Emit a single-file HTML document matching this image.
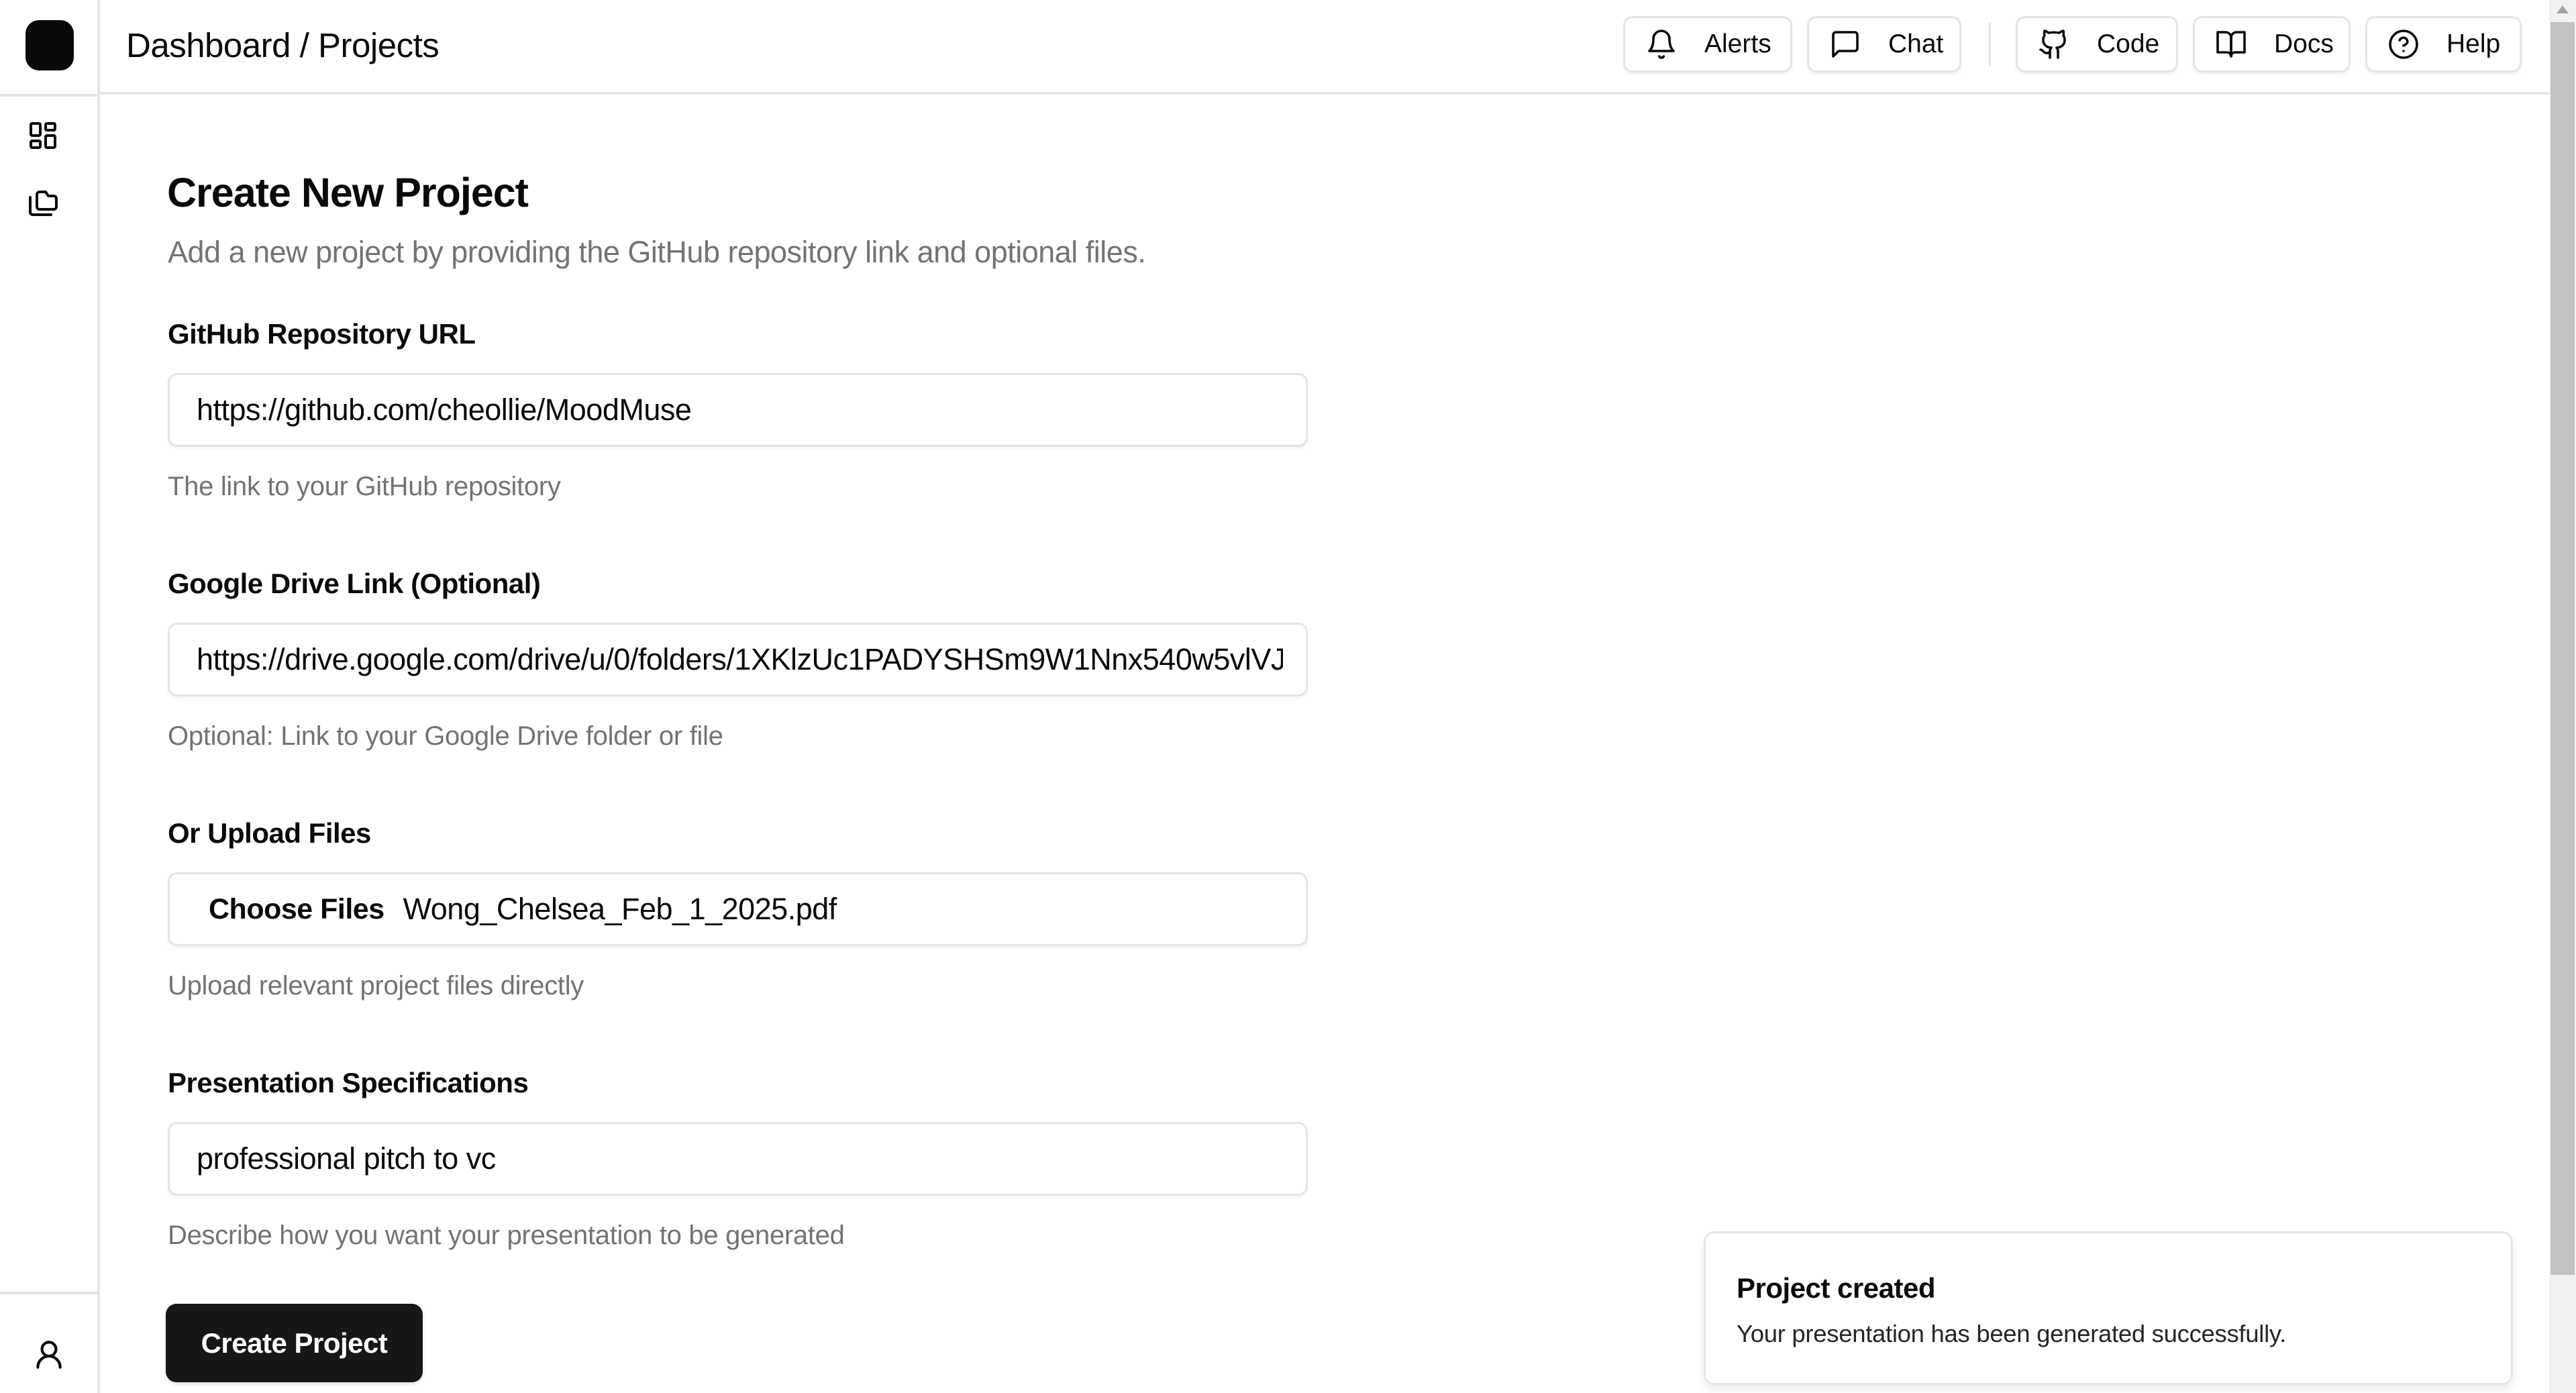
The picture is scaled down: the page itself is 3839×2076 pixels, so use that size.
<!DOCTYPE html>
<html><head><meta charset="utf-8"><style>
*{box-sizing:border-box;margin:0;padding:0}
body{width:3839px;height:2076px;overflow:hidden;background:#fff;font-family:"Liberation Sans",Arial,sans-serif;color:#0a0a0a;position:relative}
.a{position:absolute}
.side{left:0;top:0;width:149px;height:2076px;border-right:4px solid #e5e5e5}
.hdr{left:149px;top:0;width:3650px;height:141px;border-bottom:4px solid #e5e5e5}
.btn{top:24px;height:84px;border:3px solid #e5e5e5;border-radius:14px;box-shadow:0 3px 5px rgba(0,0,0,.06);display:flex;align-items:center;font-size:39px;font-weight:500;padding-left:30px}
.btn svg{width:48px;height:48px;margin-right:40px;fill:none;stroke:#0a0a0a;stroke-width:1.8;stroke-linecap:round;stroke-linejoin:round}
.lbl{left:250px;font-size:42px;font-weight:bold;letter-spacing:-0.5px}
.inp{left:250px;width:1699px;height:110px;border:3px solid #e5e5e5;border-radius:14px;box-shadow:0 3px 5px rgba(0,0,0,.05);display:flex;align-items:center;padding-left:40px;font-size:45px;white-space:nowrap;overflow:hidden;letter-spacing:-0.5px}
.help{left:250px;font-size:40px;color:#737373;letter-spacing:-0.3px}
.ic{fill:none;stroke:#0a0a0a;stroke-width:2;stroke-linecap:round;stroke-linejoin:round}
</style></head><body>
<div class="a side"></div>
<div class="a" style="left:0;top:140px;width:149px;height:4px;background:#e5e5e5"></div>
<div class="a" style="left:0;top:1925px;width:149px;height:4px;background:#e5e5e5"></div>
<div class="a" style="left:38px;top:30px;width:72px;height:75px;background:#0a0a0a;border-radius:20px"></div>
<svg class="a ic" style="left:40px;top:178px" width="48" height="48" viewBox="0 0 24 24"><rect x="3" y="3" width="7" height="9" rx="1"/><rect x="14" y="3" width="7" height="5" rx="1"/><rect x="14" y="12" width="7" height="9" rx="1"/><rect x="3" y="16" width="7" height="5" rx="1"/></svg>
<svg class="a ic" style="left:40px;top:278px" width="48" height="48" viewBox="0 0 24 24"><path d="M20 17a2 2 0 0 0 2-2V9a2 2 0 0 0-2-2h-4l-2-3H9.5a2 2 0 0 0-2 2v9a2 2 0 0 0 2 2Z"/><path d="M2.5 8v11a2 2 0 0 0 2 2H18"/></svg>
<svg class="a ic" style="left:48px;top:1994px" width="50" height="50" viewBox="0 0 24 24"><circle cx="12" cy="8" r="5"/><path d="M20 21a8 8 0 0 0-16 0"/></svg>

<div class="a hdr"></div>
<div class="a" style="left:188px;top:38px;font-size:51px;font-weight:500;letter-spacing:-0.5px">Dashboard / Projects</div>

<div class="a btn" style="left:2419px;width:252px"><svg viewBox="0 0 24 24"><path d="M6 8a6 6 0 0 1 12 0c0 7 3 9 3 9H3s3-2 3-9"/><path d="M10.3 21a1.94 1.94 0 0 0 3.4 0"/></svg>Alerts</div>
<div class="a btn" style="left:2693px;width:230px"><svg viewBox="0 0 24 24"><path d="M21 15a2 2 0 0 1-2 2H7l-4 4V5a2 2 0 0 1 2-2h14a2 2 0 0 1 2 2z"/></svg>Chat</div>
<div class="a" style="left:2964px;top:34px;width:3px;height:64px;background:#e5e5e5"></div>
<div class="a btn" style="left:3004px;width:242px"><svg viewBox="0 0 24 24"><path d="M15 22v-4a4.8 4.8 0 0 0-1-3.5c3 0 6-2 6-5.5.08-1.25-.27-2.48-1-3.5.28-1.15.28-2.35 0-3.5 0 0-1 0-3 1.5-2.64-.5-5.36-.5-8 0C6 2 5 2 5 2c-.3 1.15-.3 2.35 0 3.5A5.4 5.4 0 0 0 4 9c0 3.5 3 5.5 6 5.5-.39.49-.68 1.05-.85 1.65-.17.6-.22 1.23-.15 1.85v4"/><path d="M9 18c-4.51 2-5-2-7-2"/></svg>Code</div>
<div class="a btn" style="left:3268px;width:235px"><svg viewBox="0 0 24 24"><path d="M2 3h6a4 4 0 0 1 4 4v14a3 3 0 0 0-3-3H2z"/><path d="M22 3h-6a4 4 0 0 0-4 4v14a3 3 0 0 1 3-3h7z"/></svg>Docs</div>
<div class="a btn" style="left:3525px;width:233px"><svg viewBox="0 0 24 24"><circle cx="12" cy="12" r="10"/><path d="M9.1 9a3 3 0 0 1 5.8 1c0 2-3 3-3 3"/><path d="M12 17h.01"/></svg>Help</div>

<div class="a" style="left:3799px;top:0;width:40px;height:2076px;background:#f1f1f1"></div>
<div class="a" style="left:3801px;top:33px;width:36px;height:1867px;background:#c1c1c1"></div>
<div class="a" style="left:3810px;top:8px;width:0;height:0;border-left:9px solid transparent;border-right:9px solid transparent;border-bottom:12px solid #a3a3a3"></div>

<div class="a" style="left:249px;top:252px;font-size:61px;font-weight:bold;letter-spacing:-1px">Create New Project</div>
<div class="a" style="left:250px;top:350px;font-size:45px;color:#737373;letter-spacing:-0.5px">Add a new project by providing the GitHub repository link and optional files.</div>

<div class="a lbl" style="top:474px">GitHub Repository URL</div>
<div class="a inp" style="top:556px">https://github.com/cheollie/MoodMuse</div>
<div class="a help" style="top:703px">The link to your GitHub repository</div>

<div class="a lbl" style="top:846px">Google Drive Link (Optional)</div>
<div class="a inp" style="top:928px"><span style="display:block;width:1619px;overflow:hidden">https://drive.google.com/drive/u/0/folders/1XKlzUc1PADYSHSm9W1Nnx540w5vlVJG</span></div>
<div class="a help" style="top:1075px">Optional: Link to your Google Drive folder or file</div>

<div class="a lbl" style="top:1218px">Or Upload Files</div>
<div class="a inp" style="top:1300px;padding-left:58px"><b style="margin-right:28px;font-size:43px">Choose Files</b>Wong_Chelsea_Feb_1_2025.pdf</div>
<div class="a help" style="top:1447px">Upload relevant project files directly</div>

<div class="a lbl" style="top:1590px">Presentation Specifications</div>
<div class="a inp" style="top:1672px">professional pitch to vc</div>
<div class="a help" style="top:1819px">Describe how you want your presentation to be generated</div>

<div class="a" style="left:247px;top:1943px;width:383px;height:117px;background:#171717;border-radius:16px;color:#fff;font-size:42px;font-weight:bold;display:flex;align-items:center;justify-content:center;letter-spacing:-0.5px;box-shadow:0 3px 6px rgba(0,0,0,.12)">Create Project</div>

<div class="a" style="left:2539px;top:1835px;width:1206px;height:229px;border:3px solid #e5e5e5;border-radius:16px;background:#fff;box-shadow:0 8px 14px rgba(0,0,0,.08)"></div>
<div class="a" style="left:2588px;top:1896px;font-size:42px;font-weight:bold;letter-spacing:-0.5px">Project created</div>
<div class="a" style="left:2588px;top:1967px;font-size:36.5px;color:#262626;letter-spacing:-0.3px">Your presentation has been generated successfully.</div>
</body></html>
